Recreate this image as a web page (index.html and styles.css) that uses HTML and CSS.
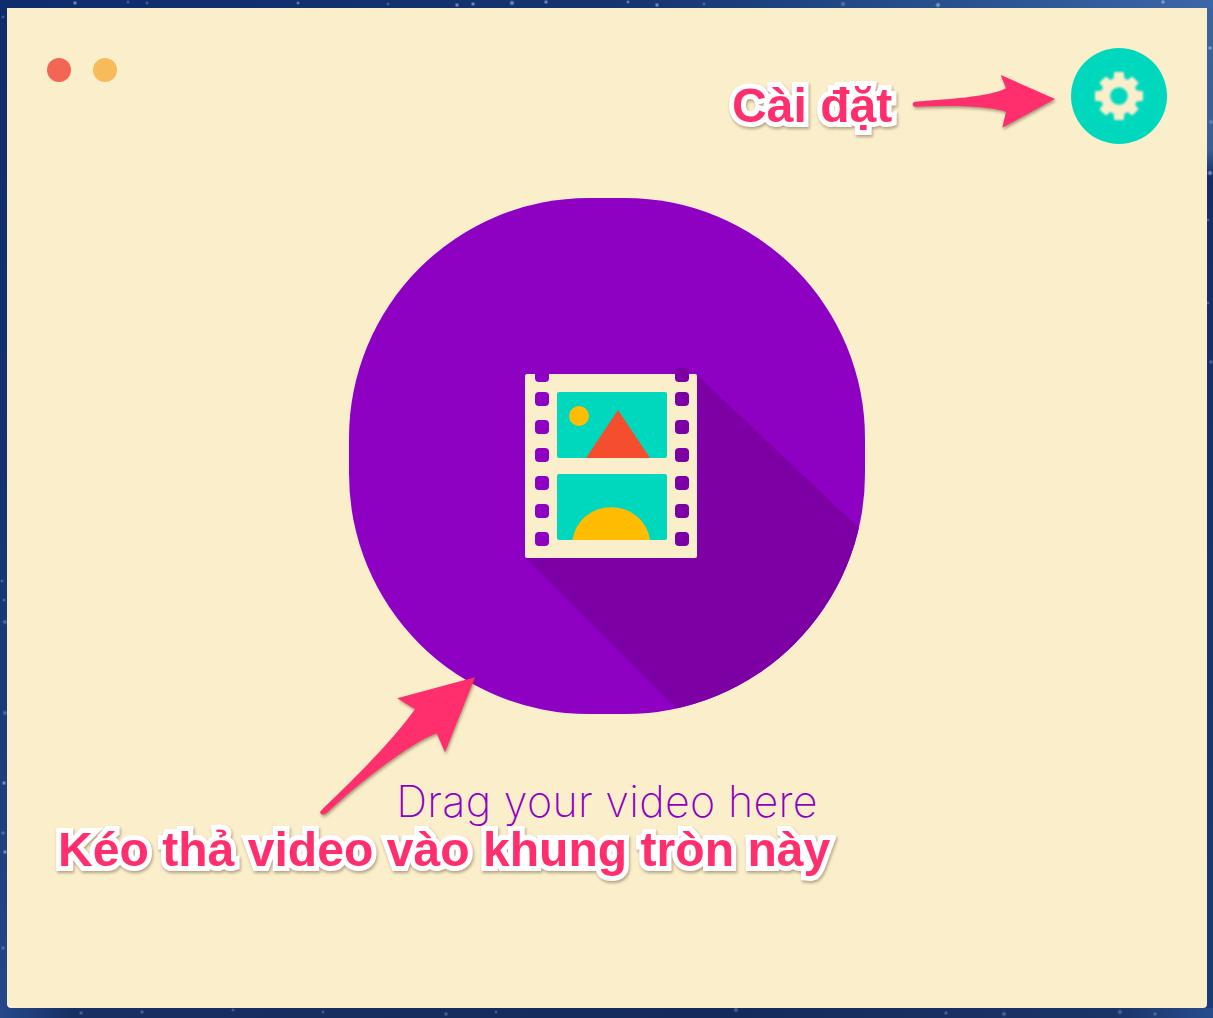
FILE: index.html
```html
<!DOCTYPE html>
<html lang="vi">
<head>
<meta charset="utf-8">
<title>Drag your video here</title>
<link rel="stylesheet" href="styles.css">
</head>
<body>
<main class="window">
  <header class="titlebar">
    <div class="lights">
      <span class="light light-red"></span>
      <span class="light light-yellow"></span>
    </div>
    <button class="settings" aria-label="Settings">
      <svg class="gear-icon" width="48" height="48" viewBox="0 0 48 48">
        <path class="gear" fill-rule="evenodd" d="M19.300 0H28.700L29.500 6.500 32.500 8 37.200 4.400 43.600 10.800 40 15.500 41.500 18.500 48 19.300V28.700L41.500 29.500 40 32.500 43.600 37.200 37.200 43.600 32.500 40 29.500 41.500 28.700 48H19.300L18.500 41.500 15.500 40 10.800 43.600 4.400 37.200 8 32.500 6.500 29.500 0 28.700V19.300L6.500 18.500 8 15.500 4.400 10.800 10.800 4.400 15.500 8 18.500 6.500ZM24 15.200a8.800 8.800 0 1 0 0 17.600 8.800 8.800 0 0 0 0-17.600Z"/>
      </svg>
    </button>
  </header>
  <section class="drop-area">
    <div class="drop-circle">
      <svg class="drop-art" width="516" height="516" viewBox="349 198 516 516">
        <polygon class="long-shadow" points="697,375 880,548 880,770 738,770 526,558"/>
        <rect class="film" x="525" y="374" width="172" height="184" rx="2"/>
        <g class="holes-left">
          <rect x="535" y="368" width="14" height="14" rx="4"/>
          <rect x="535" y="392" width="14" height="14" rx="4"/>
          <rect x="535" y="420" width="14" height="14" rx="4"/>
          <rect x="535" y="448" width="14" height="14" rx="4"/>
          <rect x="535" y="476" width="14" height="14" rx="4"/>
          <rect x="535" y="504" width="14" height="14" rx="4"/>
          <rect x="535" y="532" width="14" height="14" rx="4"/>
        </g>
        <g class="holes-right">
          <rect x="675" y="368" width="14" height="14" rx="4"/>
          <rect x="675" y="392" width="14" height="14" rx="4"/>
          <rect x="675" y="420" width="14" height="14" rx="4"/>
          <rect x="675" y="448" width="14" height="14" rx="4"/>
          <rect x="675" y="476" width="14" height="14" rx="4"/>
          <rect x="675" y="504" width="14" height="14" rx="4"/>
          <rect x="675" y="532" width="14" height="14" rx="4"/>
        </g>
        <rect class="frame" x="557" y="392" width="110" height="66" rx="2"/>
        <rect class="frame" x="557" y="474" width="110" height="66" rx="2"/>
        <circle class="sun" cx="579" cy="416" r="10"/>
        <polygon class="peak" points="618,410 650,458 586,458"/>
        <path class="sun" d="M572.500 540a39 37 0 0 1 77.500 0z"/>
      </svg>
    </div>
    <p class="hint">Drag your video here</p>
  </section>

  <span class="note note-settings">Cài đặt</span>
  <span class="note note-drop">Kéo thả video vào khung tròn này</span>
  <svg class="arrow arrow-settings" width="160" height="70" viewBox="0 0 160 70">
    <path d="M10 38.700C40 36.500 85 34 101 25.300L95.700 12 150 36 97.300 64.700 101 48.700C85 43 45 42 10 43.700 7 43.500 7 39 10 38.700Z"/>
  </svg>
  <svg class="arrow arrow-drop" width="170" height="150" viewBox="0 0 170 150">
    <path d="M9.700 140C30 120 75 78 103 39.300L85.300 28.300 163 7.300 133 82.300 124.700 63.300C100 72 50 110 14 143.500 10 146 6 143 9.700 140Z"/>
  </svg>
</main>
</body>
</html>
```
FILE: styles.css
```css
* { box-sizing: border-box; }
html, body { height: 100%; }
body {
  --star: rgba(190, 205, 232, .75);
  --dim: rgba(150, 172, 212, .55);
  margin: 0;
  overflow: hidden;
  padding: 8px 6px 10px 7px;
  background-color: #16367a;
  background-repeat: no-repeat;
  background-image:
    radial-gradient(circle 2.5px at 75px 3px, var(--star), transparent),
    radial-gradient(circle 2px at 128px 2px, var(--dim), transparent),
    radial-gradient(circle 2px at 147px 3px, var(--dim), transparent),
    radial-gradient(circle 2px at 298px 3px, var(--star), transparent),
    radial-gradient(circle 2px at 388px 4px, var(--dim), transparent),
    radial-gradient(circle 2.5px at 457px 5px, var(--star), transparent),
    radial-gradient(circle 2.5px at 473px 4px, var(--star), transparent),
    radial-gradient(circle 3px at 512px 3px, var(--star), transparent),
    radial-gradient(circle 2.5px at 546px 2px, var(--star), transparent),
    radial-gradient(circle 2px at 628px 2px, var(--star), transparent),
    radial-gradient(circle 2.5px at 657px 5px, var(--star), transparent),
    radial-gradient(circle 2px at 704px 4px, var(--dim), transparent),
    radial-gradient(circle 3px at 843px 4px, var(--dim), transparent),
    radial-gradient(circle 3px at 938px 5px, var(--star), transparent),
    radial-gradient(circle 2.5px at 1163px 2px, var(--star), transparent),
    radial-gradient(circle 2px at 3px 17px, var(--dim), transparent),
    radial-gradient(circle 2px at 2px 581px, var(--dim), transparent),
    radial-gradient(circle 2px at 4px 600px, var(--dim), transparent),
    radial-gradient(circle 3px at 5px 622px, var(--dim), transparent),
    radial-gradient(circle 3px at 5px 713px, var(--dim), transparent),
    radial-gradient(circle 2.5px at 4px 783px, var(--star), transparent),
    radial-gradient(circle 2.5px at 3px 833px, var(--dim), transparent),
    radial-gradient(circle 2.5px at 5px 852px, var(--star), transparent),
    radial-gradient(circle 2.5px at 3px 948px, var(--dim), transparent),
    radial-gradient(circle 2.5px at 1210px 48px, var(--star), transparent),
    radial-gradient(circle 3px at 1211px 122px, var(--dim), transparent),
    radial-gradient(circle 3px at 1210px 173px, var(--star), transparent),
    radial-gradient(circle 2px at 1208px 220px, var(--dim), transparent),
    radial-gradient(circle 2px at 1208px 303px, var(--dim), transparent),
    radial-gradient(circle 2.5px at 1211px 362px, var(--dim), transparent),
    radial-gradient(circle 2.5px at 81px 1013px, var(--dim), transparent),
    radial-gradient(circle 2.5px at 142px 1012px, var(--dim), transparent),
    radial-gradient(circle 2px at 233px 1010px, var(--dim), transparent),
    radial-gradient(circle 2px at 323px 1012px, var(--dim), transparent),
    radial-gradient(circle 2.5px at 446px 1014px, var(--dim), transparent),
    radial-gradient(circle 2px at 496px 1012px, var(--dim), transparent),
    radial-gradient(circle 3px at 736px 1010px, var(--dim), transparent),
    radial-gradient(circle 2.5px at 946px 1013px, var(--dim), transparent),
    radial-gradient(circle 3px at 1004px 1014px, var(--dim), transparent),
    radial-gradient(circle 3px at 1120px 1012px, var(--dim), transparent),
    radial-gradient(circle 2.5px at 1155px 1014px, var(--dim), transparent),
    linear-gradient(90deg, #0f2d6e 0%, #14336f 50%, #28508f 78%, #3b66a8 100%),
    linear-gradient(90deg, #25498c 0%, #172f63 6%, #142a5c 60%, #1b3468 92%, #274c8e 100%),
    linear-gradient(180deg, #0e2c6c 0%, #13326f 45%, #24478a 100%),
    linear-gradient(180deg, #3d639f 0, #3d5d96 150px, #142c6c 178px, #1b3b78 100%);
  background-size:
    auto, auto, auto, auto, auto, auto, auto, auto, auto, auto,
    auto, auto, auto, auto, auto, auto, auto, auto, auto, auto,
    auto, auto, auto, auto, auto, auto, auto, auto, auto, auto,
    auto, auto, auto, auto, auto, auto, auto, auto, auto, auto, auto,
    100% 8px, 100% 10px, 7px 100%, 6px 100%;
  background-position:
    0 0, 0 0, 0 0, 0 0, 0 0, 0 0, 0 0, 0 0, 0 0, 0 0,
    0 0, 0 0, 0 0, 0 0, 0 0, 0 0, 0 0, 0 0, 0 0, 0 0,
    0 0, 0 0, 0 0, 0 0, 0 0, 0 0, 0 0, 0 0, 0 0, 0 0,
    0 0, 0 0, 0 0, 0 0, 0 0, 0 0, 0 0, 0 0, 0 0, 0 0, 0 0,
    0 0, 0 100%, 0 0, 100% 0;
}
.window {
  position: relative;
  width: 1200px;
  height: 1000px;
  background: #fbeecb;
  border-radius: 0 0 4px 4px;
  display: flex;
  flex-direction: column;
  padding: 40px;
}
.titlebar {
  display: flex;
  justify-content: space-between;
  align-items: flex-start;
  height: 96px;
}
.lights {
  display: flex;
  gap: 22px;
  margin-top: 10px;
}
.light {
  width: 24px;
  height: 24px;
  border-radius: 50%;
}
.light-red { background: #f36653; }
.light-yellow { background: #f7bb5a; }
.settings {
  width: 96px;
  height: 96px;
  padding: 0;
  border: 0;
  border-radius: 50%;
  background: #00d8bd;
  display: flex;
  align-items: center;
  justify-content: center;
}
.gear-icon { filter: blur(.8px); }
.gear { fill: #fbeecb; }
.drop-area {
  display: flex;
  flex-direction: column;
  align-items: center;
  margin-top: 54px;
}
.drop-circle {
  width: 516px;
  height: 516px;
  border-radius: 240px;
  background: #8e00c2;
  overflow: hidden;
}
.drop-art { display: block; }
.long-shadow { fill: #7c00a3; }
.film { fill: #fbeecb; }
.holes-left rect { fill: #8e00c2; }
.holes-right rect { fill: #7c00a3; }
.frame { fill: #00d8bd; }
.sun { fill: #ffbc00; }
.peak { fill: #f44e2e; }
.hint {
  margin: 61px 0 0;
  font-family: Inter, sans-serif;
  font-weight: 200;
  font-size: 43px;
  letter-spacing: .3px;
  line-height: 52px;
  white-space: nowrap;
  color: #8e00c2;
}
.note {
  position: absolute;
  font-family: "Liberation Sans", sans-serif;
  font-weight: 700;
  font-size: 48.1px;
  line-height: 56px;
  white-space: nowrap;
  color: #ff2f6d;
  -webkit-text-stroke: 10px #fff;
  paint-order: stroke fill;
  filter: drop-shadow(1px 2px 1.5px rgba(90, 70, 40, .45));
}
.note-settings { left: 725px; top: 69px; }
.note-drop { left: 51px; top: 813px; }
.arrow {
  position: absolute;
  overflow: visible;
  filter: drop-shadow(1px 2px 1.5px rgba(90, 70, 40, .5));
}
.arrow path { fill: #ff2f6d; }
.arrow-settings { left: 898px; top: 55px; }
.arrow-drop { left: 305px; top: 662px; }
```
